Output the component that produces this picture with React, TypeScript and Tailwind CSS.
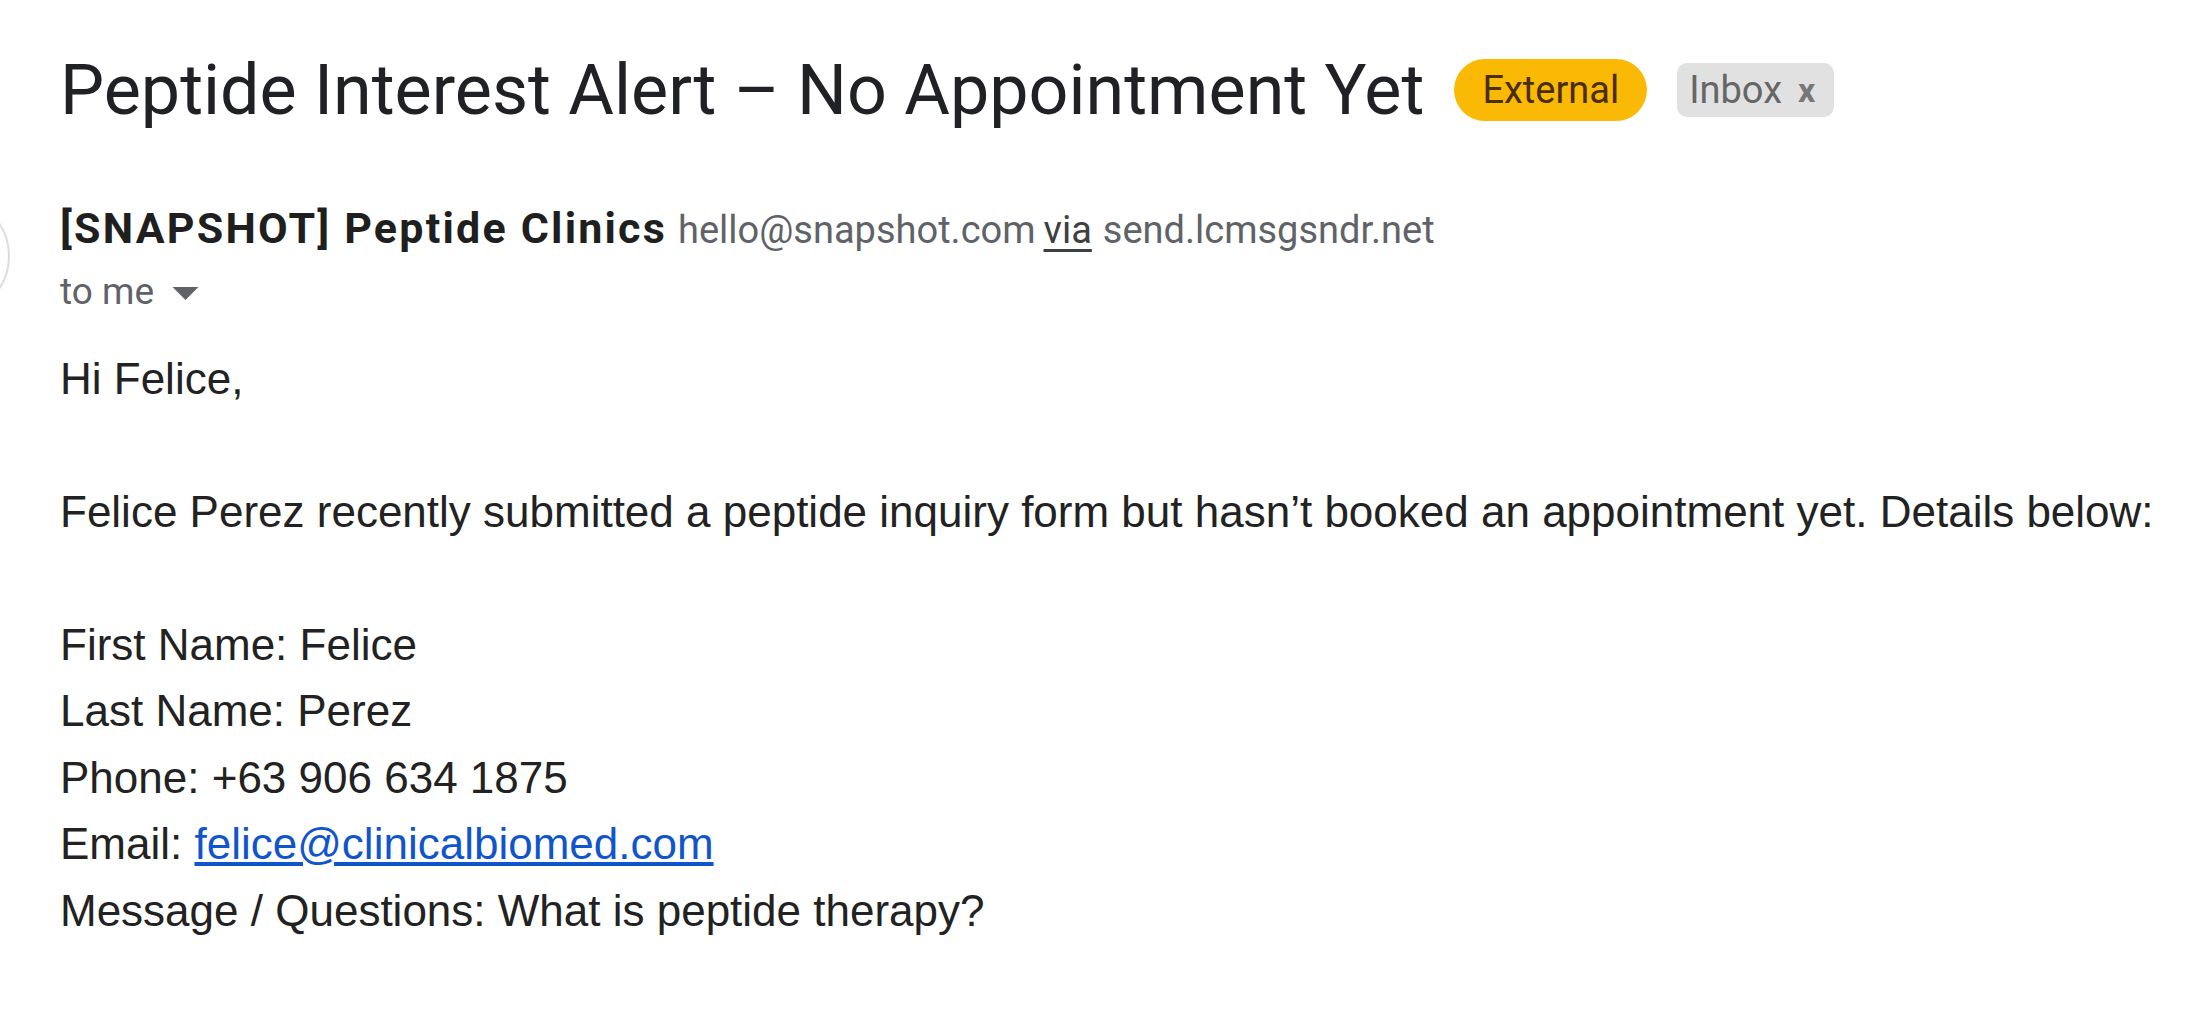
const body = "font-['Liberation_Sans',Arial,sans-serif]";

const details = [
  { label: "First Name:", value: "Felice" },
  { label: "Last Name:", value: "Perez" },
  { label: "Phone:", value: "+63 906 634 1875" },
];

export default function App() {
  return (
    <div className="relative min-h-screen w-full overflow-hidden bg-white">
      {/* avatar, cut off by the left edge */}
      <div className="absolute left-[-110px] top-[196px] h-[120px] w-[120px] rounded-full border-2 border-[#dadce0] bg-white" />

      <div className="pl-[60px] pt-[52px]">
        {/* subject */}
        <div className="flex items-center">
          <h1 className="font-['Roboto',sans-serif] text-[70px] leading-[76px] font-normal text-[#202124]">
            Peptide Interest Alert – No Appointment Yet
          </h1>
          <span className="ml-[30px] flex h-[62px] items-center rounded-full bg-[#f9b904] px-[28px] font-['Roboto',sans-serif] text-[38px] text-[#4a2d00]">
            External
          </span>
          <span className="ml-[30px] flex h-[54px] items-center gap-[16px] rounded-[10px] bg-[#e1e1e1] pl-[12px] pr-[19px] font-['Roboto',sans-serif] text-[38px] text-[#666666]">
            Inbox
            <span className="text-[34px] font-bold text-[#777777]">x</span>
          </span>
        </div>

        {/* sender */}
        <div className="mt-[68px] flex items-baseline font-['Roboto',sans-serif]">
          <span className="text-[43px] font-bold tracking-[2.2px] text-[#1f1f1f]">[SNAPSHOT] Peptide Clinics</span>
          <span className="ml-[11px] text-[38px] text-[#5f6368]">hello@snapshot.com</span>
          <span className="ml-[8px] text-[38px] text-[#3c4043] underline decoration-[3px] underline-offset-[6px]">via</span>
          <span className="ml-[11px] text-[38px] text-[#5f6368]">send.lcmsgsndr.net</span>
        </div>
        <div className="mt-[7px] flex items-center font-['Roboto',sans-serif] text-[37px] leading-[48px] text-[#5f6368]">
          to me
          <svg viewBox="0 0 10 5" className="ml-[18px] mt-[4px] h-[13px] w-[27px]">
            <path d="M0 0h10L5 5z" fill="#5f6368" />
          </svg>
        </div>

        {/* message body */}
        <div className={`${body} mt-[30px] text-[44px] leading-[66.5px] text-[#222222]`}>
          <p>Hi Felice,</p>
          <p className="mt-[66.5px]">
            Felice Perez recently submitted a peptide inquiry form but hasn’t booked an appointment yet. Details below:
          </p>
          <div className="mt-[66.5px]">
            {details.map((d) => (
              <p key={d.label}>
                {d.label} {d.value}
              </p>
            ))}
            <p>
              Email:{" "}
              <a href="#" className="text-[#1155cc] underline">
                felice@clinicalbiomed.com
              </a>
            </p>
            <p>Message / Questions: What is peptide therapy?</p>
          </div>
        </div>
      </div>
    </div>
  );
}
